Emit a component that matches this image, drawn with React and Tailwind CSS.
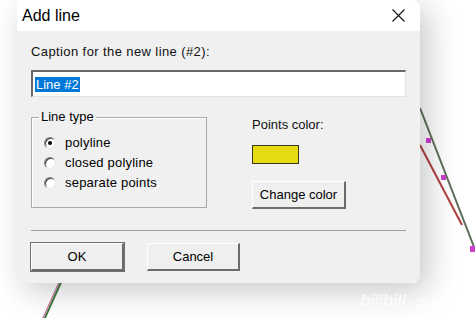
import React from 'react';

const font = { fontFamily: '"Liberation Sans", Arial, sans-serif' };

function Radio({ checked, label }) {
  return (
    <div className="flex items-center h-[20px]">
      <span className="relative w-[12px] h-[12px] rounded-full bg-white border border-t-[#808080] border-l-[#808080] border-b-[#e8e8e8] border-r-[#e8e8e8] shadow-[inset_1px_1px_0_#404040] flex items-center justify-center">
        {checked && <span className="w-[4px] h-[4px] rounded-full bg-black" />}
      </span>
      <span className="ml-[9px] text-[13px] leading-[20px] tracking-[0.2px] text-black">{label}</span>
    </div>
  );
}

function WinButton({ children, primary, className = '' }) {
  return (
    <button
      className={
        'h-[28px] text-[13px] text-black bg-[#efefef] border-t border-l border-t-white border-l-white border-b-2 border-r-2 border-b-[#6b6b6b] border-r-[#6b6b6b] ' +
        (primary ? 'outline outline-1 outline-[#6f6f6f] ' : '') +
        className
      }
    >
      {children}
    </button>
  );
}

export default function App() {
  return (
    <div className="relative w-[475px] h-[318px] bg-white overflow-hidden" style={font}>
      {/* background chart lines */}
      <svg className="absolute inset-0" width="475" height="318">
        <line x1="420" y1="108" x2="476" y2="252" stroke="#5f6f5a" strokeWidth="2" />
        <line x1="420" y1="145" x2="462" y2="225" stroke="#b04040" strokeWidth="2" />
        <rect x="426" y="138" width="5" height="5" fill="#d040d0" />
        <rect x="441" y="175" width="5" height="5" fill="#d040d0" />
        <rect x="470" y="246" width="5" height="6" fill="#d040d0" />
        <line x1="62" y1="280" x2="44" y2="320" stroke="#3f7a3f" strokeWidth="2" />
        <line x1="60" y1="280" x2="42" y2="320" stroke="#c05090" strokeWidth="1" />
      </svg>

      <div className="relative ml-[17px] w-[403px] h-[283px] rounded-b-[8px] rounded-tr-[8px] shadow-[8px_8px_32px_rgba(0,0,0,0.22)] overflow-hidden flex flex-col">
        {/* title bar */}
        <div className="h-[31px] bg-white flex items-center justify-between pl-[5px] pr-[15px]">
          <span className="text-[16px] text-black">Add line</span>
          <svg width="13" height="13" viewBox="0 0 13 13">
            <path d="M0.5 0.5 L12.5 12.5 M12.5 0.5 L0.5 12.5" stroke="#111" strokeWidth="1.1" />
          </svg>
        </div>

        {/* body */}
        <div className="flex-1 bg-[#f0f0f0] px-[14px]">
          <div className="pt-[13px] text-[13px] leading-[16px] tracking-[0.4px] text-[#111]">Caption for the new line (#2):</div>
          <div className="mt-[10px] w-[375px] h-[27px] bg-white border-t-2 border-l-2 border-t-[#6a6a6a] border-l-[#6a6a6a] border-b border-r border-b-[#e3e3e3] border-r-[#e3e3e3] flex items-center pl-[2px]">
            <span className="bg-[#0078d7] text-white text-[13px] leading-[15px] px-[1px]">Line #2</span>
          </div>

          <div className="mt-[13px] flex">
            <fieldset className="w-[176px] h-[98px] border border-[#a9a9a9] shadow-[inset_1px_1px_0_#fff] pl-[12px]">
              <legend className="ml-[-5px] px-[2px] text-[13px] leading-[14px] text-black">Line type</legend>
              <div className="pt-[9px]">
                <Radio checked label="polyline" />
                <Radio label="closed polyline" />
                <Radio label="separate points" />
              </div>
            </fieldset>

            <div className="ml-[45px] flex flex-col items-start">
              <div className="mt-[8px] text-[13px] leading-[14px] text-[#111]">Points color:</div>
              <div className="mt-[13px] w-[47px] h-[19px] bg-[#e6db12] border border-[#3a3a1a]" />
              <WinButton className="mt-[17px] w-[94px]">Change color</WinButton>
            </div>
          </div>

          <div className="mt-[21px] w-[375px] h-px bg-[#a0a0a0]" />

          <div className="mt-[12px] flex gap-[23px]">
            <WinButton primary className="w-[93px]">OK</WinButton>
            <WinButton className="w-[93px]">Cancel</WinButton>
          </div>
        </div>
      </div>

      {/* watermark */}
      <div className="absolute left-[360px] top-[288px] flex items-end gap-[10px] text-white/70">
        <span className="text-[17px] font-bold italic tracking-tight">bilibili</span>
        <span className="text-[14px]" style={{ fontFamily: '"Noto Sans CJK SC", sans-serif' }}>夜雨</span>
      </div>
    </div>
  );
}
